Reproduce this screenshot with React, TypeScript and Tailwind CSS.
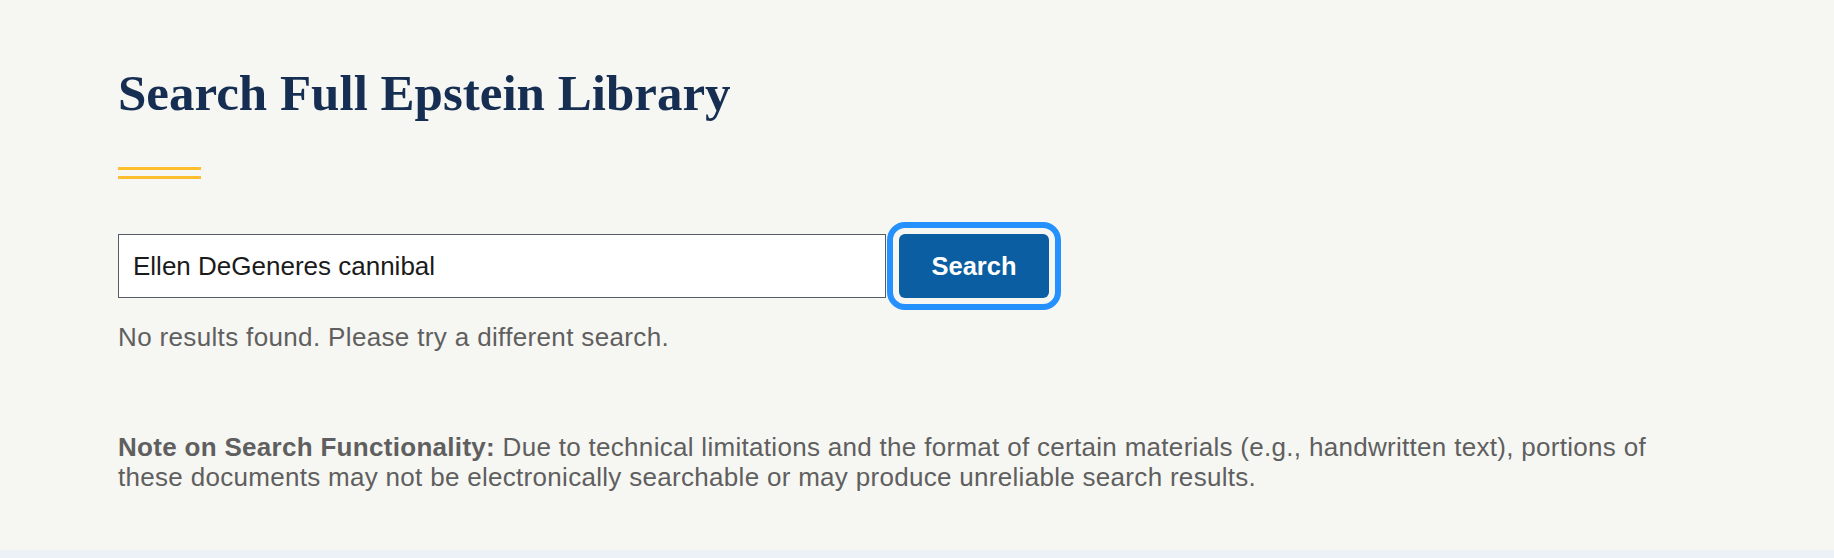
import { useState } from 'react';

// Search page for the library
const App = () => {
  const [query, setQuery] = useState('Ellen DeGeneres cannibal');

  return (
    <div className="min-h-screen bg-[#f6f6f2] font-['Liberation_Sans',Arial,sans-serif]">
      <main className="px-[118px] pt-[63px] pb-[58px]">
        {/* Header */}
        <h1 className="font-['Liberation_Serif','Times_New_Roman',serif] text-[51px] leading-[60px] font-bold text-[#162e51]">
          Search Full Epstein Library
        </h1>
        <div className="mt-[44px] flex flex-col gap-[6px] w-[83px]">
          <div className="h-[3px] bg-[#ffbe2e]" />
          <div className="h-[3px] bg-[#ffbe2e]" />
        </div>

        {/* Search form */}
        <form
          className="mt-[55px] flex items-center gap-[13px]"
          onSubmit={(e) => e.preventDefault()}
        >
          <input
            type="text"
            value={query}
            onChange={(e) => setQuery(e.target.value)}
            className="w-[768px] h-[64px] bg-white border border-[#565c65] pl-[14px] pr-3 text-[26px] text-[#1b1b1b] focus:outline-none"
          />
          <button
            type="submit"
            className="w-[150px] h-[64px] rounded-[6px] bg-[#0b5ea1] text-white text-[25.5px] font-bold outline-solid outline-[6px] outline-offset-[6px] outline-[#2491ff]"
          >
            Search
          </button>
        </form>

        <p className="mt-[24px] text-[26px] leading-[30px] tracking-[0.35px] text-[#5f5f5f]">
          No results found. Please try a different search.
        </p>

        {/* Note */}
        <p className="mt-[80px] max-w-[1560px] text-[26px] leading-[30px] tracking-[0.3px] text-[#5f5f5f]">
          <strong className="font-bold">Note on Search Functionality:</strong> Due to technical limitations and the
          format of certain materials (e.g., handwritten text), portions of these documents may not be electronically
          searchable or may produce unreliable search results.
        </p>
      </main>
      <div className="h-[8px] bg-[#ecf1f7]" />
    </div>
  );
};

export default App;
